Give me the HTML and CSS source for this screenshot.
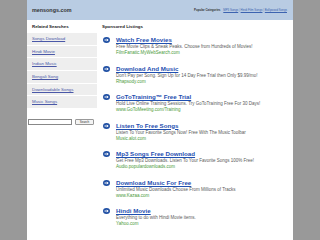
FILE: index.html
```html
<!DOCTYPE html>
<html lang="en">

<head>
  <meta charset="UTF-8">
  <meta name="viewport" content="width=device-width, initial-scale=1.0">
  <title>mensongs.com</title>

  <link rel="stylesheet" href="styles.css">
</head>

<body>
  <div class="page">
    <div class="topbar">
      <span class="site">mensongs.com</span>
      <div class="popular">
        <b>Popular Categories</b>
        <a href="#">MP3 Songs</a> |
        <a href="#">Hindi Film Songs</a> |
        <a href="#">Bollywood Songs</a>
      </div>
    </div>

    <div class="main">
      <div class="sidebar">
        <h2>Related Searches</h2>
        <ul class="related">
          <li><a href="#">Songs Download</a></li>
          <li><a href="#">Hindi Movie</a></li>
          <li><a href="#">Indian Music</a></li>
          <li><a href="#">Bengali Song</a></li>
          <li><a href="#">Downloadable Songs</a></li>
          <li><a href="#">Music Songs</a></li>
        </ul>
        <div class="search">
          <input type="text">
          <button>Search</button>
        </div>
      </div>

      <div class="content">
        <h2>Sponsored Listings</h2>
        <div id="listings"></div>
      </div>
    </div>
  </div>

  <script>
    const ads = [
      ["Watch Free Movies", "Free Movie Clips & Sneak Peaks. Choose from Hundreds of Movies!", "FilmFanatic.MyWebSearch.com"],
      ["Download And Music", "Don't Pay per Song. Sign Up for 14 Day Free Trial then Only $9.99/mo!", "Rhapsody.com"],
      ["GoToTraining\u2122 Free Trial", "Hold Live Online Training Sessions. Try GoToTraining Free For 30 Days!", "www.GoToMeeting.com/Training"],
      ["Listen To Free Songs", "Listen To Your Favorite Songs Now! Free With The Music Toolbar", "Music.alot.com"],
      ["Mp3 Songs Free Download", "Get Free Mp3 Downloads. Listen To Your Favorite Songs 100% Free!", "Audio.populardownloads.com"],
      ["Download Music For Free", "Unlimited Music Downloads Choose From Millions of Tracks", "www.Kazaa.com"],
      ["Hindi Movie", "Everything to do with Hindi Movie items.", "Yahoo.com"]
    ]

    const list = document.getElementById("listings")

    ads.forEach(([title, desc, url]) => {
      const item = document.createElement("div")
      item.className = "ad"
      item.innerHTML = `
        <svg class="icon" viewBox="0 0 14 12">
          <ellipse cx="7" cy="6" rx="7" ry="6" fill="#1f4fa3"/>
          <path d="M3 6h7M8 3.6l2.4 2.4L8 8.4" stroke="#fff" stroke-width="2" fill="none"/>
        </svg>
        <div class="ad-body">
          <a href="#" class="ad-title"></a>
          <p class="ad-desc"></p>
          <p class="ad-url"></p>
        </div>`
      item.querySelector(".ad-title").textContent = title
      item.querySelector(".ad-desc").textContent = desc
      item.querySelector(".ad-url").textContent = url
      list.appendChild(item)
    })
  </script>
</body>

</html>
```

FILE: styles.css
```css
body,
html {
  font-family: 'Liberation Sans', Arial, sans-serif;
  background-color: #999999;

  padding: 0;
  margin: 0;
}

.page {
  width: 266px;
  min-height: 240px;
  margin: 0 auto;

  background-color: #fff;
}

.topbar {
  display: flex;
  justify-content: space-between;
  align-items: center;

  height: 20px;
  padding: 0 6px 0 5px;

  background-color: #b9cce3;
}

.site {
  font-size: 5.4px;
  font-weight: bold;
  color: #333;
}

.popular {
  font-size: 2.9px;
  color: #6f86a8;
}

.popular b {
  color: #333;
  margin-right: 2px;
}

.popular a {
  color: #3c63b0;
}

.main {
  display: flex;
}

h2 {
  font-size: 4.4px;
  font-weight: bold;
  color: #222;

  height: 13px;
  line-height: 14px;
  margin: 0;
}

.sidebar {
  width: 70px;
}

.sidebar h2 {
  padding-left: 5px;
}

.related {
  list-style: none;
  margin: 0;
  padding: 0;
}

.related li {
  font-size: 4.4px;
  height: 11.7px;
  line-height: 12.6px;
  padding-left: 5px;

  background-color: #eeeeee;
  border-bottom: 1px solid #fff;
}

.related a {
  color: #4a58a8;
}

.search {
  display: flex;
  align-items: center;

  margin-top: 10px;
  padding-left: 1px;
}

.search input {
  width: 42px;
  height: 4px;
  padding: 0;
  margin: 0 3px 0 0;

  border: 1px solid #888;
  border-radius: 0;
}

.search button {
  width: 19px;
  height: 6px;
  padding: 0;

  font-family: inherit;
  font-size: 3px;
  color: #333;

  background-color: #f4f4f4;
  border: 1px solid #999;
  border-radius: 1px;
}

.content {
  flex: 1;
  padding-left: 5px;
}

#listings {
  padding-top: 3px;
}

.ad {
  display: flex;
  align-items: flex-start;

  height: 28.5px;
}

.icon {
  width: 7px;
  height: 6px;
  margin: 1px 6px 0 1px;
  flex-shrink: 0;
}

.ad-body {
  display: flex;
  flex-direction: column;
}

.ad-title {
  font-size: 6.2px;
  font-weight: bold;
  line-height: 8px;
  color: #1f4fb0;
}

.ad-desc,
.ad-url {
  font-size: 4.5px;
  line-height: 6px;
  margin: 0;
  white-space: nowrap;
}

.ad-desc {
  color: #5a5a5a;
}

.ad-url {
  color: #4a9a3a;
}
```
